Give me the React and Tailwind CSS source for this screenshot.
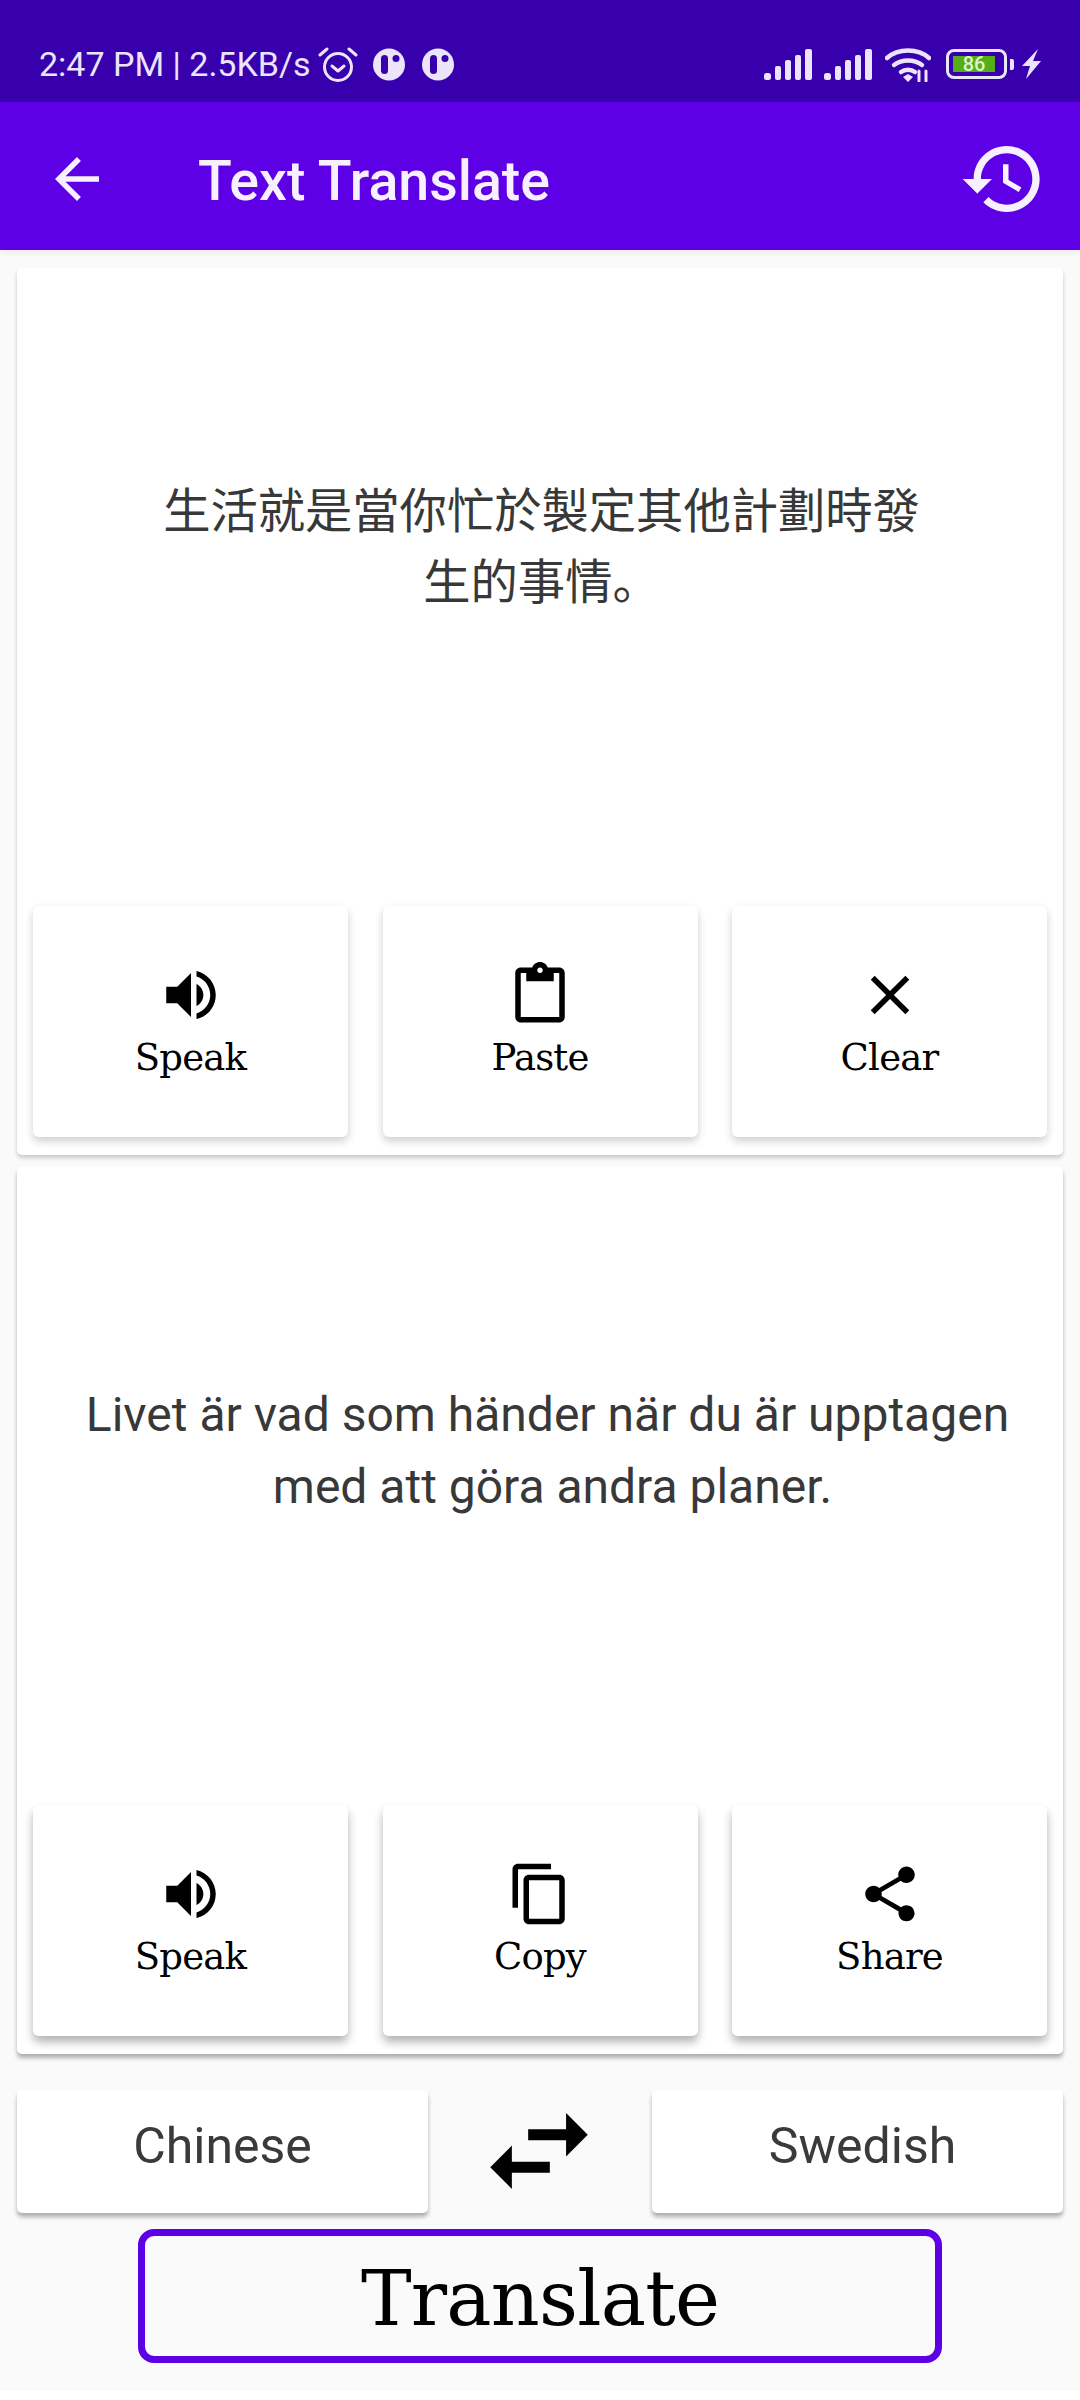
import React from 'react';

const SERIF = 'font-["DejaVu_Serif","Liberation_Serif",serif]';

const icons = {
  speak: 'M3 9v6h4l5 5V4L7 9H3zm13.5 3c0-1.77-1.02-3.29-2.5-4.03v8.05c1.48-.73 2.5-2.25 2.5-4.02zM14 3.23v2.06c2.89.86 5 3.54 5 6.71s-2.11 5.85-5 6.71v2.06c4.01-.91 7-4.49 7-8.77s-2.99-7.86-7-8.77z',
  paste: 'M19 2h-4.18C14.4.84 13.3 0 12 0c-1.3 0-2.4.84-2.82 2H5c-1.1 0-2 .9-2 2v16c0 1.1.9 2 2 2h14c1.1 0 2-.9 2-2V4c0-1.1-.9-2-2-2zm-7 0c.55 0 1 .45 1 1s-.45 1-1 1-1-.45-1-1 .45-1 1-1zm7 18H5V4h2v3h10V4h2v16z',
  clear: 'M19 6.41L17.59 5 12 10.59 6.41 5 5 6.41 10.59 12 5 17.59 6.41 19 12 13.41 17.59 19 19 17.59 13.41 12z',
  copy: 'M16 1H4c-1.1 0-2 .9-2 2v14h2V3h12V1zm3 4H8c-1.1 0-2 .9-2 2v14c0 1.1.9 2 2 2h11c1.1 0 2-.9 2-2V7c0-1.1-.9-2-2-2zm0 16H8V7h11v14z',
  share: 'M18 16.08c-.76 0-1.44.3-1.96.77L8.91 12.7c.05-.23.09-.46.09-.7s-.04-.47-.09-.7l7.05-4.11c.54.5 1.25.81 2.04.81 1.66 0 3-1.34 3-3s-1.34-3-3-3-3 1.34-3 3c0 .24.04.47.09.7L8.04 9.81C7.5 9.31 6.79 9 6 9c-1.66 0-3 1.34-3 3s1.34 3 3 3c.79 0 1.5-.31 2.04-.81l7.12 4.16c-.05.21-.08.43-.08.65 0 1.61 1.31 2.92 2.92 2.92 1.61 0 2.92-1.31 2.92-2.92s-1.31-2.92-2.92-2.92z',
  back: 'M20 11H7.83l5.59-5.59L12 4l-8 8 8 8 1.41-1.41L7.83 13H20v-2z',
  history: 'M13 3c-4.97 0-9 4.03-9 9H1l3.89 3.89.07.14L9 12H6c0-3.87 3.13-7 7-7s7 3.13 7 7-3.13 7-7 7c-1.93 0-3.68-.79-4.94-2.06l-1.42 1.42C8.27 19.99 10.51 21 13 21c4.97 0 9-4.03 9-9s-4.03-9-9-9zm-1 5v5l4.28 2.54.72-1.21-3.5-2.08V8H12z',
  swap: 'M6.99 11L3 15l3.99 4v-3H14v-2H6.99v-3zM21 9l-4-4v3h-7v2h7v3l4-4z',
};

function Icon({ name, className }) {
  return (
    <svg viewBox="0 0 24 24" fill="currentColor" className={className}>
      <path d={icons[name]} />
    </svg>
  );
}

function ActionButton({ icon, label, shadow }) {
  return (
    <button className={`h-[231px] w-[315px] flex flex-col items-center pt-[56px] bg-white rounded-[6px] text-black ${shadow}`}>
      <Icon name={icon} className="w-[66px] h-[66px] shrink-0" />
      <span className={`${SERIF} text-[37px] tracking-[-0.8px] leading-[48px] mt-[6px]`}>{label}</span>
    </button>
  );
}

function TextCard({ children, actions, className, buttonShadow }) {
  return (
    <section className={`mx-[17px] bg-white rounded-[5px] flex flex-col ${className}`}>
      <div className="flex-1 text-center text-[#383838] font-['Roboto','Noto_Sans_CJK_SC',sans-serif]">
        {children}
      </div>
      <div className="flex justify-between px-[16px] pb-[18px]">
        {actions.map(([icon, label]) => (
          <ActionButton key={label} icon={icon} label={label} shadow={buttonShadow} />
        ))}
      </div>
    </section>
  );
}

function Signal() {
  return (
    <svg viewBox="0 0 48 31" className="w-[48px] h-[31px]" fill="#ece4fb">
      <rect x="0" y="24" width="7" height="7" rx="2.5" />
      <rect x="11" y="17" width="6" height="14" rx="2" />
      <rect x="21" y="11" width="6" height="20" rx="2" />
      <rect x="31" y="6" width="6" height="25" rx="2" />
      <rect x="41" y="0" width="7" height="31" rx="2" />
    </svg>
  );
}

function AppDot() {
  return (
    <svg viewBox="0 0 32 33" className="w-[32px] h-[33px]">
      <circle cx="16" cy="16.5" r="16" fill="#ece4fb" />
      <rect x="8" y="7" width="7" height="19" rx="3.5" fill="#3700ac" />
      <circle cx="23" cy="10.5" r="3.5" fill="#3700ac" />
    </svg>
  );
}

function StatusBar() {
  return (
    <div className="h-[102px] bg-[#3700ac] flex items-center justify-between pl-[39px] pr-[39px] pt-[26px] text-[#ece4fb]">
      <div className="flex items-center">
        <span className="font-['Roboto',sans-serif] text-[34px] leading-none whitespace-nowrap">2:47 PM | 2.5KB/s</span>
        <svg viewBox="0 0 40 37" className="w-[40px] h-[37px] ml-[7px]" fill="none" stroke="#ece4fb" strokeWidth="3" strokeLinecap="round" strokeLinejoin="round">
          <circle cx="20" cy="21" r="13.5" />
          <path d="M14 20l6 5 6-5" />
          <path d="M2 9l7-6M38 9l-7-6" />
        </svg>
        <div className="flex gap-[17px] ml-[15px]">
          <AppDot />
          <AppDot />
        </div>
      </div>
      <div className="flex items-center">
        <Signal />
        <div className="ml-[12px]">
          <Signal />
        </div>
        <svg viewBox="0 0 46 35" className="w-[46px] h-[35px] ml-[13px]" fill="none" stroke="#ece4fb" strokeWidth="4.5" strokeLinecap="round">
          <path d="M2 11C13 1 33 1 44 11" />
          <path d="M9 18c8-6 20-6 28 0" />
          <path d="M16 25c4-3 10-3 14 0" />
          <path d="M18 30l5-3 5 3-5 5z" fill="#ece4fb" stroke="none" />
          <path d="M34 24v10M41 24v10" strokeWidth="3" />
        </svg>
        <div className="ml-[15px] w-[61px] h-[30px] border-[3px] border-[#ece4fb] rounded-[8px] flex items-center pl-[4px]">
          <div className="w-[42px] h-[16px] bg-[#55ad17] flex items-center justify-center">
            <span className="font-['Roboto',sans-serif] text-[20px] leading-none font-medium text-[#dff5cf]">86</span>
          </div>
        </div>
        <div className="w-[4px] h-[11px] ml-[3px] bg-[#ece4fb] rounded-r-[2px]" />
        <svg viewBox="0 0 19 30" className="w-[19px] h-[30px] ml-[8px]" fill="#ece4fb">
          <path d="M16 0L0 17h8L4 30 19 12h-8z" />
        </svg>
      </div>
    </div>
  );
}

export default function App() {
  return (
    <div className="w-[1080px] h-[2400px] bg-[#fafafa] flex flex-col overflow-hidden">
      <StatusBar />
      <header className="h-[148px] pt-[6px] bg-[#5e00e6] text-[#f7f0ff] flex items-center shrink-0 shadow-[0_3px_6px_rgba(0,0,0,0.06)]">
        <Icon name="back" className="w-[66px] h-[66px] ml-[44px]" />
        <h1 className="ml-[88px] mt-[6px] font-['Roboto',sans-serif] font-medium text-[55.5px] leading-none">Text Translate</h1>
        <Icon name="history" className="w-[88px] h-[88px] ml-auto mr-[33px]" />
      </header>

      <TextCard
        className="mt-[18px] h-[887px] shadow-[0_3px_4px_rgba(0,0,0,0.2)]"
        buttonShadow="shadow-[0_4px_8px_rgba(0,0,0,0.2)]"
        actions={[['speak', 'Speak'], ['paste', 'Paste'], ['clear', 'Clear']]}
      >
        <p className="pt-[209px] pl-[3px] text-[47.3px] leading-[71px]">
          生活就是當你忙於製定其他計劃時發
          <br />
          生的事情。
        </p>
      </TextCard>

      <TextCard
        className="mt-[12px] h-[887px] shadow-[0_4px_4px_rgba(0,0,0,0.3)]"
        buttonShadow="shadow-[0_6px_10px_rgba(0,0,0,0.3)]"
        actions={[['speak', 'Speak'], ['copy', 'Copy'], ['share', 'Share']]}
      >
        <p className="pt-[212px] pl-[15px] text-[48px] leading-[72px]">
          Livet är vad som händer när du är upptagen
          <br />
          <span className="pl-[10px]">med att göra andra planer.</span>
        </p>
      </TextCard>

      <div className="mt-[32px] mx-[17px] flex items-center justify-between">
        <button className="w-[411px] h-[123px] pb-[10px] bg-white rounded-[5px] shadow-[0_4px_4px_rgba(0,0,0,0.3)] font-['Roboto',sans-serif] text-[50px] text-[#3a3a3a]">
          Chinese
        </button>
        <Icon name="swap" className="w-[130px] h-[130px] mr-[2px] text-black" />
        <button className="w-[411px] h-[123px] pb-[10px] pl-[10px] bg-white rounded-[5px] shadow-[0_4px_4px_rgba(0,0,0,0.3)] font-['Roboto',sans-serif] text-[50px] text-[#3a3a3a]">
          Swedish
        </button>
      </div>

      <button className={`mt-[13px] mx-auto w-[804px] h-[134px] pt-[6px] border-[7px] border-[#5e00e6] rounded-[16px] ${SERIF} text-[76px] tracking-[-0.8px] leading-none text-black`}>
        Translate
      </button>

      <div className="mt-auto h-[9px] bg-white" />
    </div>
  );
}
